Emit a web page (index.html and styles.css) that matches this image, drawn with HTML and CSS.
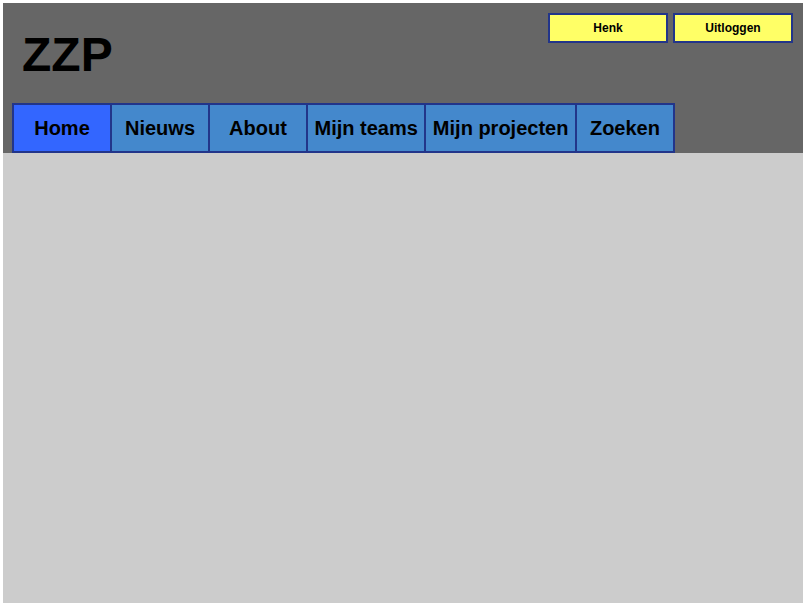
FILE: index.html
```html
<!DOCTYPE html>
<html>
<head>
<meta charset="utf-8">
<title>ZZP</title>
<link rel="stylesheet" href="styles.css">
</head>
<body>
<div class="page">
  <header class="header">
    <div class="top-row">
      <div class="logo">ZZP</div>
      <div class="user-buttons">
        <a class="user-btn">Henk</a>
        <a class="user-btn">Uitloggen</a>
      </div>
    </div>
    <nav class="nav">
      <a class="tab active">Home</a>
      <a class="tab">Nieuws</a>
      <a class="tab">About</a>
      <a class="tab">Mijn teams</a>
      <a class="tab">Mijn projecten</a>
      <a class="tab">Zoeken</a>
    </nav>
  </header>
  <main class="content"></main>
</div>
</body>
</html>
```
FILE: styles.css
```css
html, body {
  margin: 0;
  padding: 0;
  background: #ffffff;
}
body {
  padding: 3px;
  font-family: "Liberation Sans", Arial, sans-serif;
}
.page {
  width: 800px;
  height: 600px;
  background: #cccccc;
  display: flex;
  flex-direction: column;
}
.header {
  height: 150px;
  box-sizing: border-box;
  background: #666666;
  padding: 10px 10px 0 9px;
  display: flex;
  flex-direction: column;
}
.top-row {
  display: flex;
  justify-content: space-between;
  align-items: flex-start;
}
.logo {
  font-size: 48px;
  font-weight: bold;
  color: #000;
  line-height: 55px;
  margin: 14px 0 0 10px;
}
.user-buttons {
  display: flex;
  gap: 5px;
}
.user-btn {
  width: 120px;
  height: 30px;
  box-sizing: border-box;
  background: #ffff66;
  border: 2px solid #22358a;
  display: flex;
  align-items: center;
  justify-content: center;
  font-size: 12px;
  font-weight: bold;
  color: #000;
}
.nav {
  margin-top: auto;
  display: flex;
}
.tab {
  height: 50px;
  min-width: 100px;
  box-sizing: border-box;
  padding: 0 6.5px;
  margin-right: -2px;
  background: #4488cc;
  border: 2px solid #22358a;
  display: flex;
  align-items: center;
  justify-content: center;
  font-size: 20px;
  font-weight: bold;
  color: #000;
  white-space: nowrap;
}
.tab.active {
  background: #3366ff;
}
.content {
  flex: 1;
}
```
